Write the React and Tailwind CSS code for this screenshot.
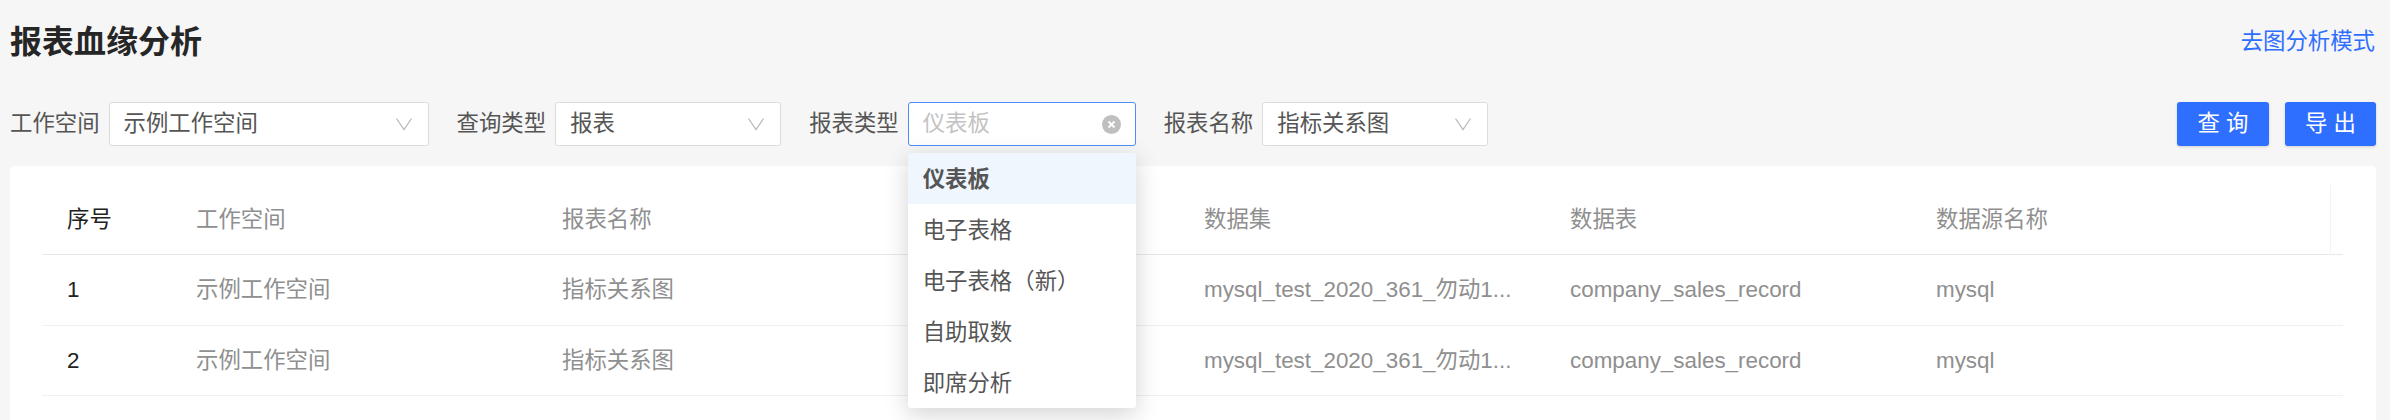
const Chevron = () => (
  <svg width="22" height="14" viewBox="0 0 22 14" fill="none" className="shrink-0">
    <path d="M3.5 1.5 L11 12.5 L18.5 1.5" stroke="#bbbbbb" strokeWidth="1.3" />
  </svg>
);

const Select = ({ width, value }) => (
  <div className={`${width} h-[44px] flex items-center justify-between pl-[14px] pr-[13px] bg-white border border-[#dcdcdc] rounded-[3px] text-[#555555]`}>
    <span>{value}</span>
    <Chevron />
  </div>
);

const Label = ({ children }) => <span className="mr-[9px] text-[#555555]">{children}</span>;

const columns = [
  { cls: "w-[129px]", head: "序号", dark: true },
  { cls: "w-[366px]", head: "工作空间", cell: "示例工作空间" },
  { cls: "w-[366px]", head: "报表名称", cell: "指标关系图" },
  { cls: "w-[276px]", head: "", cell: "" },
  { cls: "w-[366px]", head: "数据集", cell: "mysql_test_2020_361_勿动1..." },
  { cls: "w-[366px]", head: "数据表", cell: "company_sales_record" },
  { cls: "flex-1", head: "数据源名称", cell: "mysql" },
];

const Row = ({ height, values, border }) => (
  <div className={`flex items-center ${height} border-b ${border}`}>
    {values.map((v, i) => (
      <div key={i} className={`${columns[i].cls} pl-[25px] whitespace-nowrap ${i === 0 ? "text-[#222222]" : "text-[#8f8f8f]"}`}>
        {v}
      </div>
    ))}
  </div>
);

const Item = ({ children }) => (
  <div className="h-[51px] flex items-center pl-[15px] pt-[2px]">{children}</div>
);

export default function App() {
  return (
    <div className="relative w-[2390px] h-[420px] overflow-hidden bg-[#f6f6f6] text-[22.4px] leading-[30px] font-['Liberation_Sans','Noto_Sans_CJK_SC',sans-serif]">
      <div className="flex items-center justify-between pl-[10px] pr-[15px] pt-[22px] h-[62px]">
        <h1 className="text-[32px] leading-[36px] font-semibold text-[#262626]">报表血缘分析</h1>
        <a className="text-[#2f6fff]">去图分析模式</a>
      </div>
      <div className="flex items-center justify-between pl-[10px] pr-[14px] mt-[40px] h-[44px]">
        <div className="flex items-center">
          <Label>工作空间</Label>
          <Select width="w-[320px]" value="示例工作空间" />
          <div className="ml-[28px] flex items-center">
            <Label>查询类型</Label>
            <Select width="w-[226px]" value="报表" />
          </div>
          <div className="ml-[28px] flex items-center">
            <Label>报表类型</Label>
            <div className="relative">
              <div className="w-[228px] h-[44px] flex items-center justify-between pl-[14px] pr-[14px] bg-white border border-[#4a8dfb] rounded-[3px]">
                <span className="text-[#c2c2c2]">仪表板</span>
                <svg width="19" height="19" viewBox="0 0 19 19" className="shrink-0">
                  <circle cx="9.5" cy="9.5" r="9.5" fill="#bfbfbf" />
                  <path d="M6.5 6.5 L12.5 12.5 M12.5 6.5 L6.5 12.5" stroke="#ffffff" strokeWidth="1.8" />
                </svg>
              </div>
              <div className="absolute z-10 left-0 top-[51px] w-[228px] rounded-[3px] bg-white text-[#555555] overflow-hidden shadow-[0_6px_24px_rgba(0,0,0,0.18)]">
                <div className="h-[51px] flex items-center pl-[15px] pt-[2px] bg-[#eff6fe] font-semibold">仪表板</div>
                <Item>电子表格</Item>
                <Item>电子表格（新）</Item>
                <Item>自助取数</Item>
                <Item>即席分析</Item>
              </div>
            </div>
          </div>
          <div className="ml-[28px] flex items-center">
            <Label>报表名称</Label>
            <Select width="w-[226px]" value="指标关系图" />
          </div>
        </div>
        <div className="flex items-center gap-[16px]">
          <button className="w-[92px] h-[44px] rounded-[3px] bg-[#2f6fff] text-white shadow-[0_1px_3px_rgba(0,0,0,0.15)]">查 询</button>
          <button className="w-[91px] h-[44px] rounded-[3px] bg-[#2f6fff] text-white shadow-[0_1px_3px_rgba(0,0,0,0.15)]">导 出</button>
        </div>
      </div>
      <div className="mt-[20px] ml-[10px] w-[2366px] h-[254px] bg-white rounded-t-[4px] pt-[19px] pl-[32px] pr-[33px]">
        <div className="relative">
          <Row height="h-[70px]" border="border-[#e8e8e8]" values={columns.map((c) => c.head)} />
          <div className="absolute right-[12px] top-0 h-[70px] border-r border-[#f2f2f2]" />
          <Row height="h-[71px]" border="border-[#f0f0f0]" values={columns.map((c, i) => (i === 0 ? "1" : c.cell))} />
          <Row height="h-[70px]" border="border-[#f0f0f0]" values={columns.map((c, i) => (i === 0 ? "2" : c.cell))} />
        </div>
      </div>
    </div>
  );
}
